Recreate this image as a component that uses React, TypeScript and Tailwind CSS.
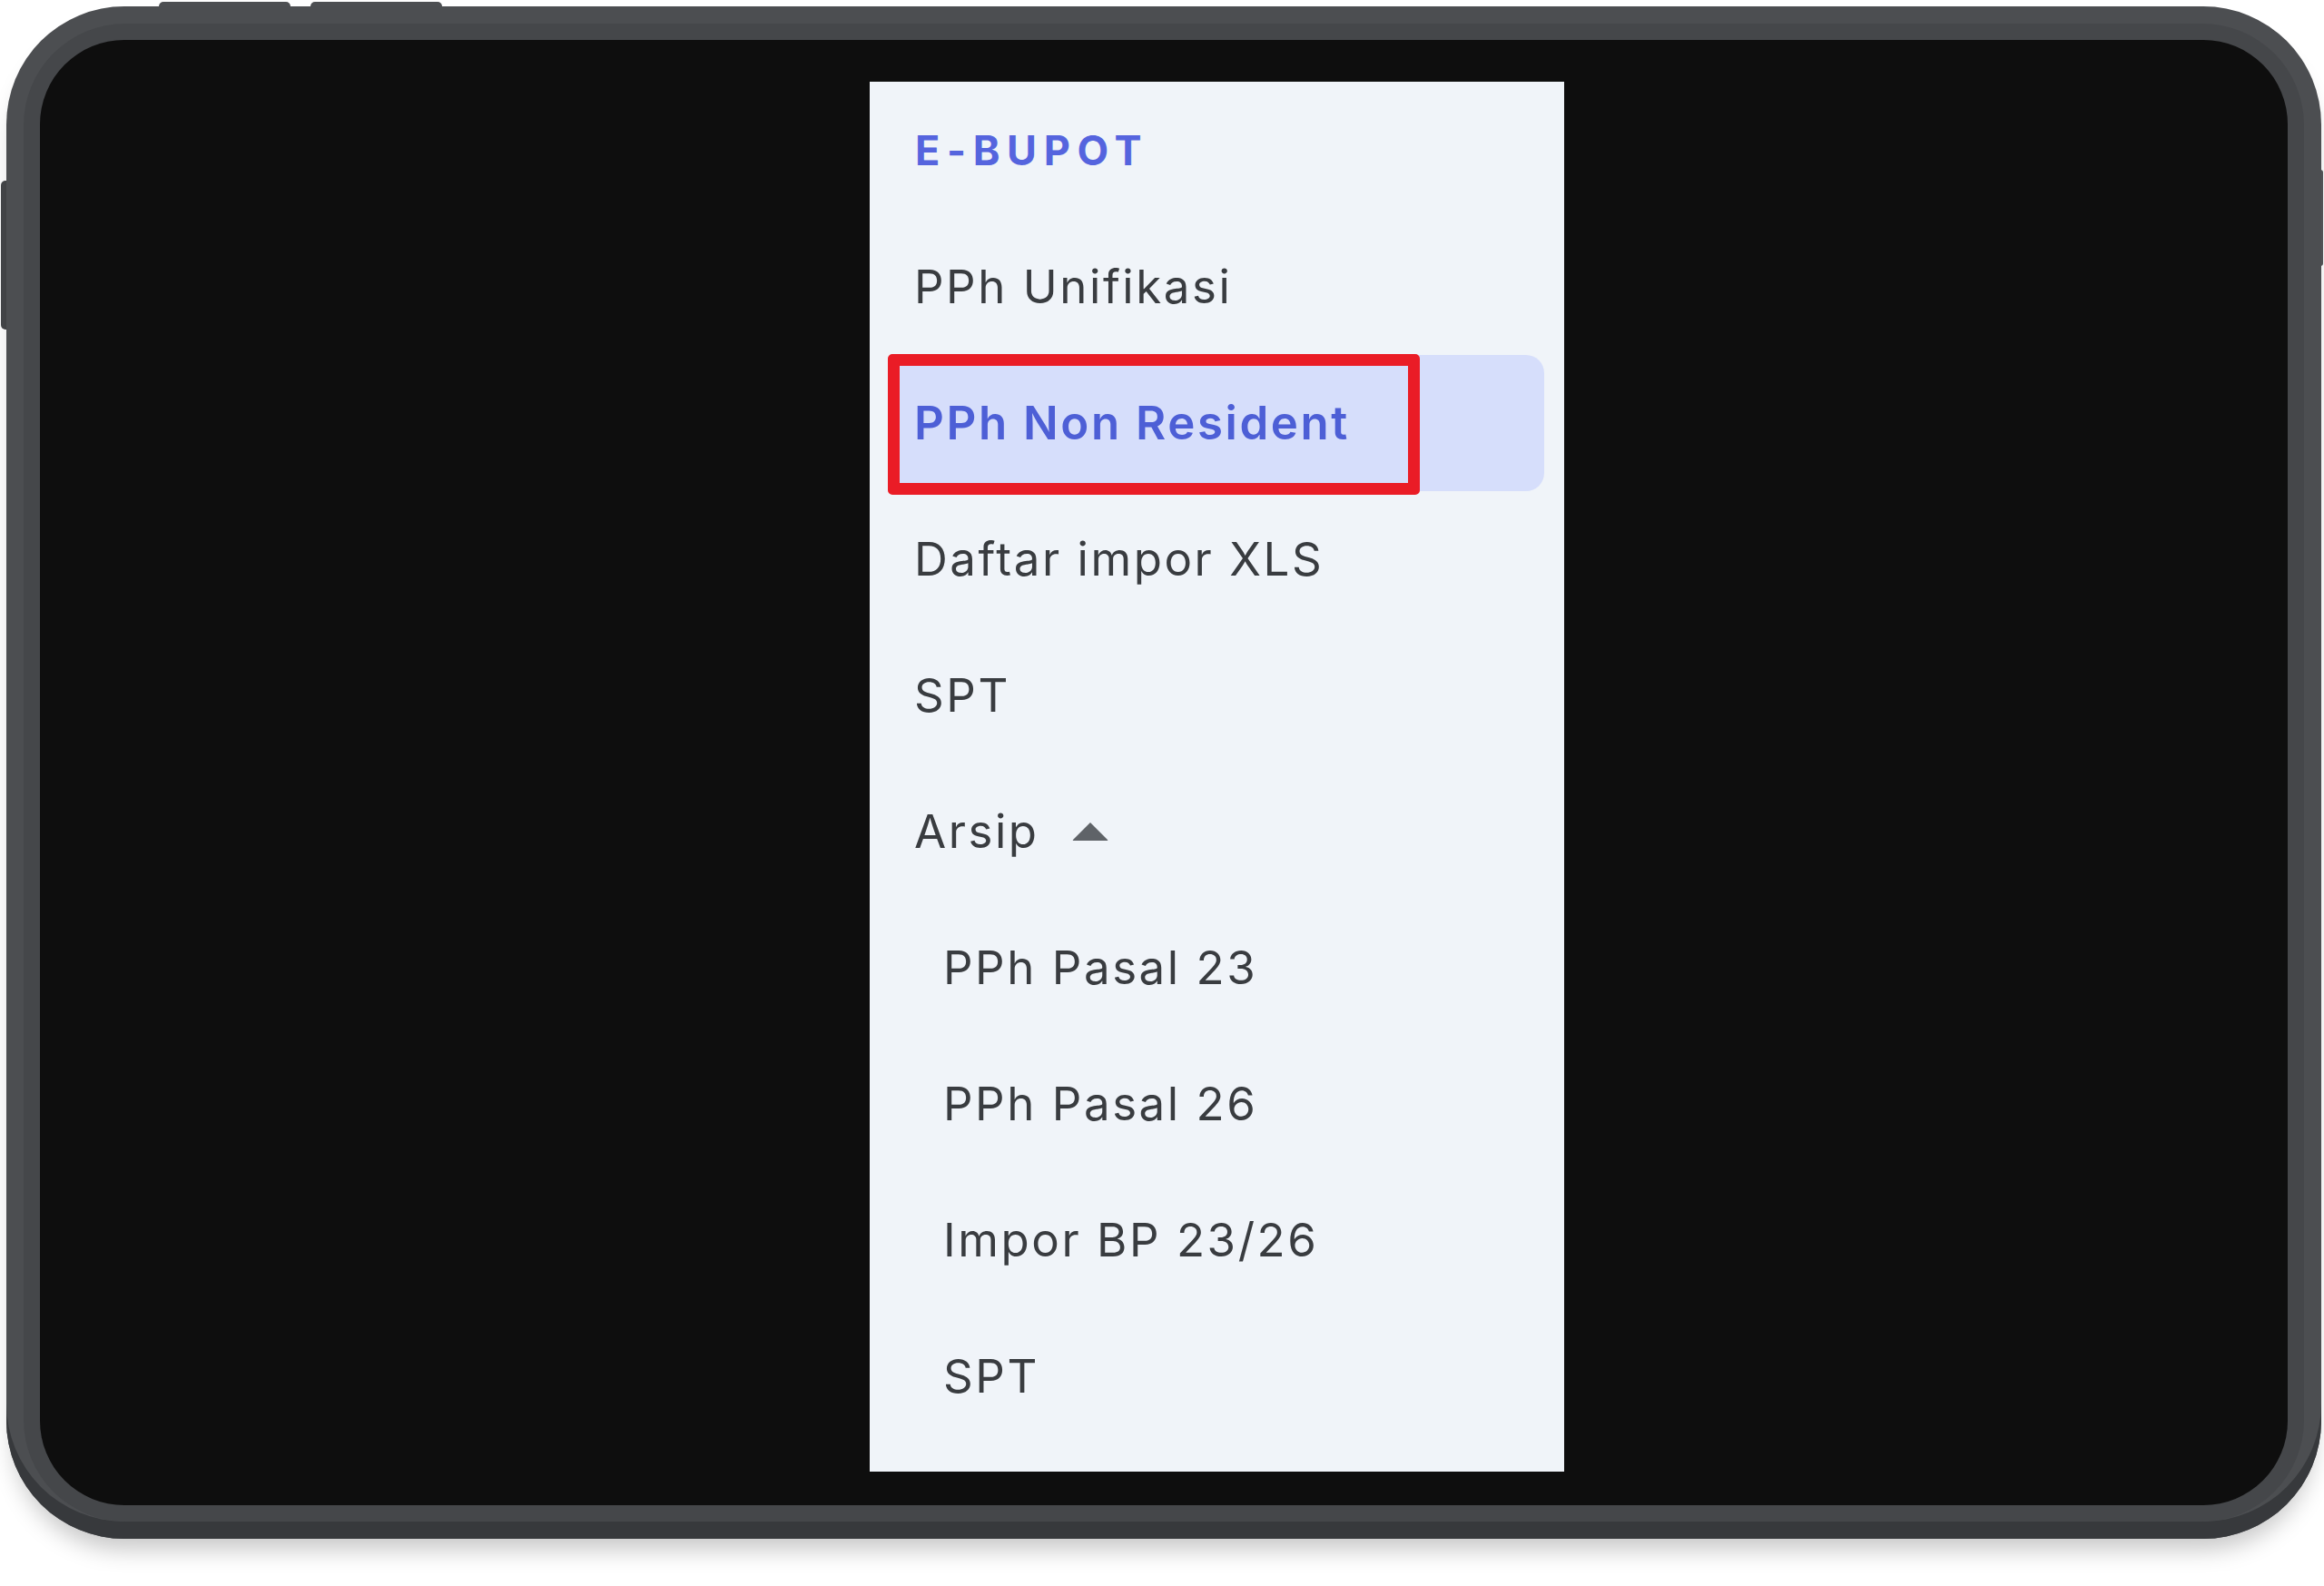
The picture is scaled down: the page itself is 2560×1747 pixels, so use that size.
import { useState } from "react";

type Item = { label: string; sub?: boolean };

const items: Item[] = [
  { label: "PPh Unifikasi" },
  { label: "PPh Non Resident" },
  { label: "Daftar impor XLS" },
  { label: "SPT" },
  { label: "Arsip" },
  { label: "PPh Pasal 23", sub: true },
  { label: "PPh Pasal 26", sub: true },
  { label: "Impor BP 23/26", sub: true },
  { label: "SPT", sub: true },
];

function Caret() {
  return (
    <svg width="44" height="24" viewBox="0 0 44 24" className="ml-[34px]">
      <path d="M22 2 L41 21 Q42 22 40.5 22 L3.5 22 Q2 22 3 21 Z" fill="#5f6368" />
    </svg>
  );
}

function Sidebar() {
  const [active, setActive] = useState(1);
  const [open, setOpen] = useState(true);

  return (
    <div className="w-[765px] h-[1531px] bg-[#f0f4f9] font-['Inter','Noto_Sans',sans-serif]">
      <div className="h-[151px] flex items-center pl-[50px]">
        <span className="text-[45px] leading-none font-bold tracking-[0.17em] text-[#5564de]">E-BUPOT</span>
      </div>
      {items.map((item, i) => {
        if (item.sub && !open) return null;
        const isActive = i === active;
        const isArsip = item.label === "Arsip";
        return (
          <div key={i} className="relative mx-[22px] h-[150px]">
            <button
              type="button"
              onClick={() => (isArsip ? setOpen((v) => !v) : setActive(i))}
              className={`w-full h-full flex items-center text-left text-[51px] tracking-[0.05em] rounded-[20px] ${
                item.sub ? "pl-[59px]" : "pl-[27px]"
              } ${isActive ? "bg-[#d6defb] text-[#4d5fd6] font-semibold" : "text-[#393c40]"}`}
            >
              <span>{item.label}</span>
              {isArsip && <Caret />}
            </button>
            {isActive && (
              <span className="pointer-events-none absolute -left-[2px] -top-[1px] w-[586px] h-[155px] rounded-[5px] border-[13px] border-[#ea1c26]" />
            )}
          </div>
        );
      })}
    </div>
  );
}

export default function App() {
  return (
    <div className="relative w-[2560px] h-[1747px] bg-white overflow-hidden">
      {/* hardware buttons */}
      <span className="absolute left-[175px] top-[2px] w-[145px] h-[10px] rounded-t-[5px] bg-[#4d4f52]" />
      <span className="absolute left-[342px] top-[2px] w-[145px] h-[10px] rounded-t-[5px] bg-[#4d4f52]" />
      <span className="absolute left-[1px] top-[199px] w-[10px] h-[164px] rounded-l-[5px] bg-[#45474a]" />
      <span className="absolute right-[1px] top-[187px] w-[4px] h-[106px] rounded-r-[3px] bg-[#55575a]" />

      <div className="pt-[7px] pl-[7px]">
        <div className="relative w-[2550px] h-[1688px] rounded-[130px] bg-[#4c4e51] p-[19px] shadow-[inset_0_-19px_0_#37393c,0_20px_26px_-8px_rgba(0,0,0,0.22)]">
          <div className="h-full rounded-[112px] bg-[#45474a] p-[18px]">
            <div className="h-full rounded-[93px] bg-[#0e0e0e] pt-[46px] pl-[914px]">
              <Sidebar />
            </div>
          </div>
        </div>
      </div>
    </div>
  );
}
